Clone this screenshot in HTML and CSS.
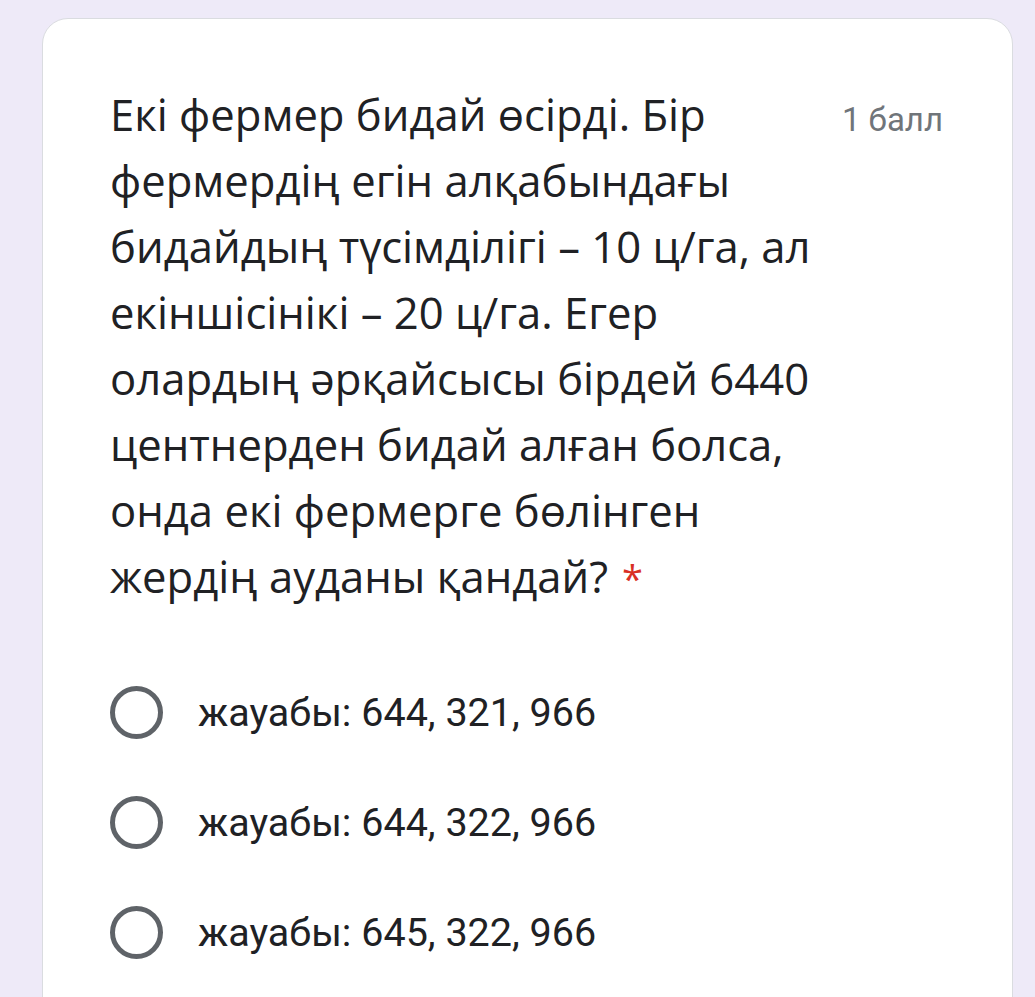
FILE: index.html
```html
<!DOCTYPE html>
<html lang="kk">
<head>
<meta charset="utf-8">
<link rel="stylesheet" href="styles.css">
</head>
<body>
<div class="card">
  <div class="head">
    <div class="question">Екі фермер бидай өсірді. Бір фермердің егін алқабындағы бидайдың түсімділігі – 10 ц/га, ал екіншісінікі – 20 ц/га. Егер олардың әрқайсысы бірдей 6440 центнерден бидай алған болса, онда екі фермерге бөлінген жердің ауданы қандай?<span class="req">*</span></div>
    <div class="points">1 балл</div>
  </div>
  <div class="options">
    <label class="option"><span class="radio"></span><span class="opt-text">жауабы: 644, 321, 966</span></label>
    <label class="option"><span class="radio"></span><span class="opt-text">жауабы: 644, 322, 966</span></label>
    <label class="option"><span class="radio"></span><span class="opt-text">жауабы: 645, 322, 966</span></label>
  </div>
</div>
</body>
</html>
```

FILE: styles.css
```css
html, body {
  margin: 0;
  padding: 0;
  background: #eeeaf8;
  height: 100%;
  overflow: hidden;
}
body {
  padding: 18px 22px 0 42px;
}
.card {
  background: #ffffff;
  border: 1px solid #dadce0;
  border-radius: 26px;
  padding: 62px 69px 60px 67px;
  min-height: 1100px;
  box-sizing: border-box;
}
.head {
  display: flex;
  align-items: baseline;
}
.question {
  flex: 0 0 714px;
  font-family: "Open Sans", sans-serif;
  font-size: 43.6px;
  line-height: 66px;
  color: #202124;
}
.req {
  color: #d93025;
  margin-left: 14px;
  font-size: 38px;
  line-height: 1;
}
.points {
  margin-left: auto;
  font-family: Roboto, sans-serif;
  font-size: 33px;
  color: #70757a;
  white-space: nowrap;
}
.options {
  margin-top: 77px;
  display: flex;
  flex-direction: column;
  gap: 57px;
}
.option {
  display: flex;
  align-items: center;
  height: 53px;
}
.radio {
  width: 53px;
  height: 53px;
  box-sizing: border-box;
  border: 5px solid #5f6368;
  border-radius: 50%;
  flex: 0 0 auto;
}
.opt-text {
  margin-left: 35px;
  font-family: Roboto, sans-serif;
  font-size: 39.5px;
  color: #202124;
}
```
